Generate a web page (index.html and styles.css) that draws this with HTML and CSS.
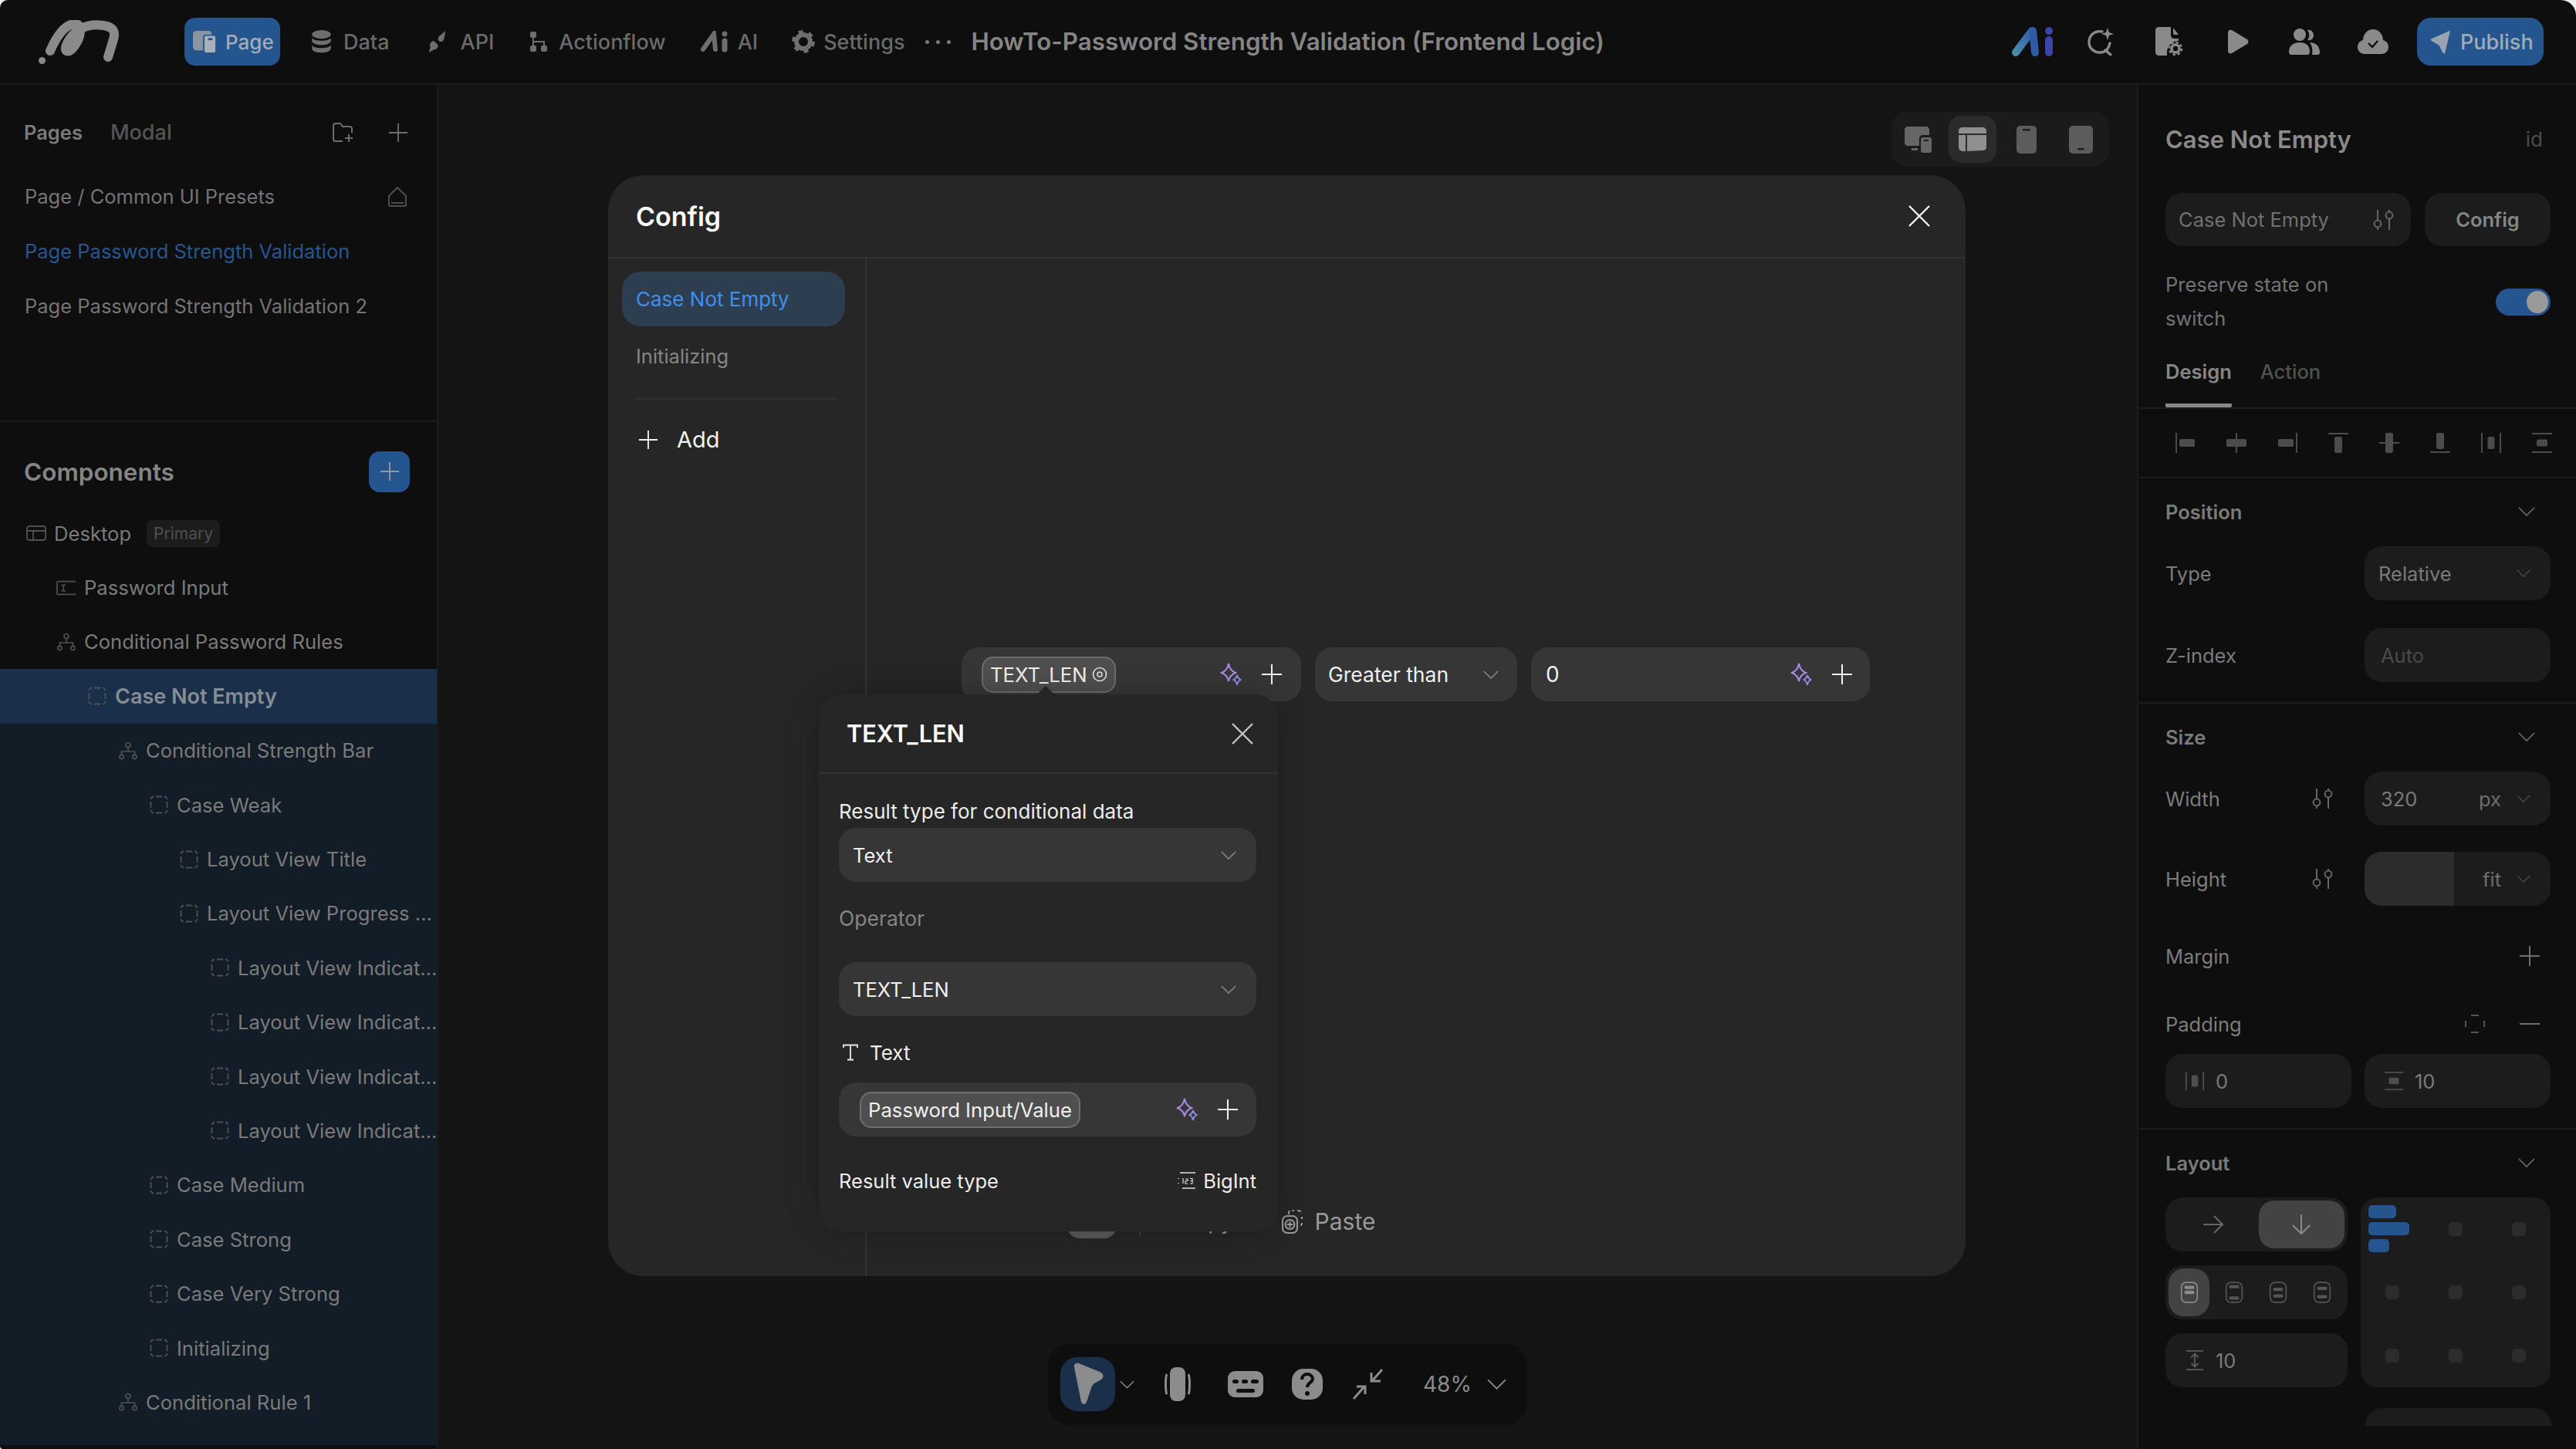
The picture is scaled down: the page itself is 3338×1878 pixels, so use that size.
FILE: index.html
```html
<!DOCTYPE html>
<html lang="en">

<head>
    <meta charset="UTF-8">
    <meta name="viewport" content="width=device-width, initial-scale=1.0">
    <title>HowTo-Password Strength Validation</title>
    <link rel="stylesheet" href="styles.css">
</head>

<body>
    <svg class="icon-defs" xmlns="http://www.w3.org/2000/svg">
        <symbol id="i-plus" viewBox="0 0 28 28"><path d="M14 1V27M1 14H27" fill="none" stroke="currentColor" stroke-width="2"/></symbol>
        <symbol id="i-minus" viewBox="0 0 28 28"><path d="M1 14H27" fill="none" stroke="currentColor" stroke-width="2"/></symbol>
        <symbol id="i-chev" viewBox="0 0 22 12"><path d="M1 1L11 11L21 1" fill="none" stroke="currentColor" stroke-width="1.6"/></symbol>
        <symbol id="i-x" viewBox="0 0 28 28"><path d="M1 1L27 27M27 1L1 27" fill="none" stroke="currentColor" stroke-width="2.4"/></symbol>
        <symbol id="i-dash" viewBox="0 0 24 24"><path d="M1.500 5A3.500 3.500 0 0 1 5 1.500M8 1.500H16M19 1.500A3.500 3.500 0 0 1 22.500 5M22.500 8V16M22.500 19A3.500 3.500 0 0 1 19 22.500M16 22.500H8M5 22.500A3.500 3.500 0 0 1 1.500 19M1.500 16V8" fill="none" stroke="currentColor" stroke-width="1.8"/></symbol>
        <symbol id="i-tree" viewBox="0 0 24 24"><g fill="none" stroke="currentColor" stroke-width="1.7"><circle cx="12" cy="4.5" r="3"/><circle cx="3.5" cy="20" r="2.6"/><circle cx="20.5" cy="20" r="2.6"/><path d="M12 7.5V13M3.5 17.4V13H20.5V17.4"/></g></symbol>
        <symbol id="i-sliders" viewBox="0 0 28 28"><g fill="none" stroke="currentColor" stroke-width="2"><circle cx="6" cy="19" r="4.4"/><path d="M6 1V14.6M6 23.4V27"/><circle cx="21" cy="8" r="4.4"/><path d="M21 1V3.6M21 12.4V27"/></g></symbol>
        <symbol id="i-spark" viewBox="0 0 28 32"><g fill="none" stroke-width="2"><path d="M11 2C12 8 15 12 20 14C15 16 12 19 11 25C10 19 7 16 2 14C7 12 10 8 11 2Z" stroke="#a98ce2"/><path d="M22 17C22.5 20 24 21.500 26.500 23C24 24.500 22.500 26 22 30C21.500 26 20 24.500 17.500 23C20 21.500 21.500 20 22 17Z" stroke="#8f8ae6"/></g></symbol>

        <symbol id="a-left" viewBox="0 0 28 28"><path d="M2 1V27" stroke="currentColor" stroke-width="2"/><rect x="6" y="9" width="20" height="10" rx="2" fill="currentColor"/></symbol>
        <symbol id="a-hcenter" viewBox="0 0 28 28"><path d="M14 1V27" stroke="currentColor" stroke-width="2"/><rect x="1" y="9" width="26" height="10" rx="2" fill="currentColor"/></symbol>
        <symbol id="a-right" viewBox="0 0 28 28"><path d="M26 1V27" stroke="currentColor" stroke-width="2"/><rect x="2" y="9" width="20" height="10" rx="2" fill="currentColor"/></symbol>
        <symbol id="a-top" viewBox="0 0 28 28"><path d="M1 2H27" stroke="currentColor" stroke-width="2"/><rect x="9" y="6" width="10" height="21" rx="2" fill="currentColor"/></symbol>
        <symbol id="a-vcenter" viewBox="0 0 28 28"><path d="M1 14H27" stroke="currentColor" stroke-width="2"/><rect x="9" y="1" width="10" height="26" rx="2" fill="currentColor"/></symbol>
        <symbol id="a-bottom" viewBox="0 0 28 28"><path d="M1 26H27" stroke="currentColor" stroke-width="2"/><rect x="9" y="1" width="10" height="21" rx="2" fill="currentColor"/></symbol>
        <symbol id="a-dishor" viewBox="0 0 28 28"><path d="M2 1V27M26 1V27" stroke="currentColor" stroke-width="2"/><rect x="9.500" y="6" width="9" height="16" rx="2" fill="currentColor"/></symbol>
        <symbol id="a-disver" viewBox="0 0 28 28"><path d="M1 2H27M1 26H27" stroke="currentColor" stroke-width="2"/><rect x="7" y="9.500" width="14" height="9" rx="2" fill="currentColor"/></symbol>

        <symbol id="d-top" viewBox="0 0 28 34"><rect x="2" y="2" width="24" height="30" rx="7" fill="none" stroke="currentColor" stroke-width="2"/><rect x="6.500" y="7" width="15" height="5" rx="2" fill="currentColor"/><rect x="6.500" y="14.500" width="15" height="5" rx="2" fill="currentColor"/></symbol>
        <symbol id="d-between" viewBox="0 0 28 34"><rect x="2" y="2" width="24" height="30" rx="7" fill="none" stroke="currentColor" stroke-width="2"/><rect x="6.500" y="6" width="15" height="5" rx="2" fill="currentColor"/><rect x="6.500" y="23" width="15" height="5" rx="2" fill="currentColor"/></symbol>
        <symbol id="d-around" viewBox="0 0 28 34"><rect x="2" y="2" width="24" height="30" rx="7" fill="none" stroke="currentColor" stroke-width="2"/><rect x="6.500" y="10" width="15" height="5" rx="2" fill="currentColor"/><rect x="6.500" y="20" width="15" height="5" rx="2" fill="currentColor"/></symbol>
        <symbol id="d-evenly" viewBox="0 0 28 34"><rect x="2" y="2" width="24" height="30" rx="7" fill="none" stroke="currentColor" stroke-width="2"/><rect x="6.500" y="8.500" width="15" height="5" rx="2" fill="currentColor"/><rect x="6.500" y="21" width="15" height="5" rx="2" fill="currentColor"/></symbol>
    </svg>

    <div class="app">
        <header class="topbar">
            <svg class="logo" viewBox="0 0 105 57"><g fill="none" stroke="#8a8a8a" stroke-linecap="round"><path d="M4.500 52.500L4.600 52.400" stroke-width="9"/><path d="M15 40C22 24 33 6 46 5C58 4 55 22 47 33C39 45 31 41 37 30C45 14 62 3 84 7C97 9 100 15 97 25L90 48" stroke-width="12"/></g></svg>
            <nav class="main-tabs">
                <a class="main-tab active">
                    <svg class="tab-icon" viewBox="0 0 32 32"><rect x="0" y="1" width="26" height="27" rx="5" fill="#8c96a3"/><rect x="15" y="7" width="17" height="25" rx="3" fill="#a8b0ba" stroke="#24558f" stroke-width="2"/><rect x="21" y="11" width="6" height="3" fill="#24558f"/></svg>
                    Page
                </a>
                <a class="main-tab data">
                    <svg class="tab-icon" viewBox="0 0 28 32"><g fill="#6e6e6e"><ellipse cx="14" cy="6" rx="13" ry="6"/><path d="M1 11C4 16 24 16 27 11V16C24 22 4 22 1 16Z"/><path d="M1 21C4 26 24 26 27 21V26C24 33 4 33 1 26Z"/></g></svg>
                    Data
                </a>
                <a class="main-tab api">
                    <svg class="tab-icon" viewBox="0 0 30 32"><g fill="#6e6e6e"><path d="M19 7L26 1L24 12C23 17 18 17 16 14C15 12 16 9 19 7Z"/><path d="M10 15L15 20C17 23 14 27 10 27L3 31L5 24C3 20 6 15 10 15Z"/></g></svg>
                    API
                </a>
                <a class="main-tab flow">
                    <svg class="tab-icon" viewBox="0 0 24 28"><g fill="#6e6e6e"><rect x="1" y="1" width="8" height="8" rx="2"/><rect x="1" y="19" width="8" height="8" rx="2"/><rect x="15" y="19" width="8" height="8" rx="2"/></g><path d="M5 9V14H19V19M5 14V19" fill="none" stroke="#6e6e6e" stroke-width="2"/></svg>
                    Actionflow
                </a>
                <a class="main-tab ai">
                    <svg class="tab-icon" viewBox="0 0 38 28"><g stroke="#6e6e6e" stroke-linecap="round" fill="none"><path d="M3 24L17 4L19 24" stroke-width="6"/><path d="M31 13V24" stroke-width="7"/><path d="M31 4V4.100" stroke-width="7"/></g></svg>
                    AI
                </a>
                <a class="main-tab settings">
                    <svg class="tab-icon" viewBox="0 0 30 30"><circle cx="15" cy="15" r="9" fill="none" stroke="#6e6e6e" stroke-width="6"/><circle cx="15" cy="15" r="13" fill="none" stroke="#6e6e6e" stroke-width="4" stroke-dasharray="6 7.600"/></svg>
                    Settings
                </a>
            </nav>
            <div class="more-dots"><i></i><i></i><i></i></div>
            <h1 class="project-title">HowTo-Password Strength Validation (Frontend Logic)</h1>
            <div class="top-actions">
                <svg class="ta ta-ai" viewBox="0 0 55 38"><defs><linearGradient id="ai-grad" x1="0" y1="1" x2="1" y2="0"><stop offset="0" stop-color="#4b8aa8"/><stop offset="1" stop-color="#2f5fb0"/></linearGradient></defs><g fill="none" stroke-linecap="round" stroke-width="10"><path d="M5 33L26 5" stroke="url(#ai-grad)"/><path d="M27 5L30 33" stroke="#2e5aa8"/><path d="M48 17V33" stroke="#3b45a8"/><path d="M48 5V5.100" stroke="#3b45a8"/></g></svg>
                <svg class="ta ta-search" viewBox="0 0 34 36"><g fill="none" stroke="#8a8a8a" stroke-width="3.400" stroke-linecap="round"><path d="M19 5C10 3 2 9 2 19C2 27 9 32 16 32C24 32 28 26 29 20"/><path d="M23 29L30 35"/></g><path d="M26 0L28 6L34 8L28 10L26 16L24 10L18 8L24 6Z" fill="#8a8a8a"/></svg>
                <svg class="ta ta-file" viewBox="0 0 36 38"><path d="M4 0H20V11C20 13 22 15 24 15H30V18C22 18 15 24 15 33V37H4C2 37 0 35 0 33V4C0 2 2 0 4 0Z" fill="#8a8a8a"/><path d="M23 1L30 10H25C24 10 23 9 23 8Z" fill="#8a8a8a"/><circle cx="26" cy="28" r="5" fill="none" stroke="#8a8a8a" stroke-width="3.500"/><circle cx="26" cy="28" r="8" fill="none" stroke="#8a8a8a" stroke-width="2.500" stroke-dasharray="3.500 2.800"/></svg>
                <svg class="ta ta-play" viewBox="0 0 28 32"><path d="M1 4C1 1 4 0 6 1L26 13C28 15 28 17 26 19L6 31C4 32 1 31 1 28Z" fill="#8a8a8a"/></svg>
                <svg class="ta ta-users" viewBox="0 0 40 34"><g fill="#8a8a8a"><circle cx="14" cy="8" r="8"/><path d="M0 30C0 22 6 18 14 18C22 18 27 22 27 30C27 32 26 34 24 34H3C1 34 0 32 0 30Z"/><path d="M24 2C29 1 32 5 32 9C32 13 28 16 24 15C27 11 27 6 24 2Z"/><path d="M27 18C35 18 40 23 40 31C40 33 39 34 37 34H30C31 28 30 22 27 18Z"/></g></svg>
                <svg class="ta ta-cloud" viewBox="0 0 40 32"><path d="M9 32C4 32 0 28 0 23C0 18 3 15 7 14C7 6 13 0 20 0C27 0 33 6 33 14C37 15 40 18 40 23C40 28 36 32 31 32Z" fill="#8a8a8a"/><path d="M14 18L19 23L26 15" fill="none" stroke="#0e0e0e" stroke-width="2.400"/></svg>
                <button class="publish">
                    <svg class="publish-icon" viewBox="0 0 28 32"><path d="M27 1L20 31C20 32 18 32 17 31L12 21L2 15C0 14 1 12 2 12Z" fill="#9aa4b0"/></svg>
                    Publish
                </button>
            </div>
        </header>

        <div class="workspace">
            <aside class="left-panel">
                <section class="pages">
                    <div class="pages-head">
                        <span class="pages-tab">Pages</span>
                        <span class="pages-tab muted">Modal</span>
                        <svg class="new-folder" viewBox="0 0 28 26"><path d="M14 24H5C3 24 2 23 2 21V4C2 2 3 1 5 1H11L14 5H23C25 5 26 6 26 8V13" fill="none" stroke="#6e6e6e" stroke-width="2"/><path d="M22 15V25M17 20H27" fill="none" stroke="#6e6e6e" stroke-width="2"/></svg>
                        <svg class="icon-26 dim pages-plus"><use href="#i-plus"/></svg>
                    </div>
                    <div class="page-row">
                        Page / Common UI Presets
                        <svg class="home" viewBox="0 0 28 26"><path d="M14 1L25 12V24C25 24.500 24.500 25 24 25H4C3.500 25 3 24.500 3 24V12Z M6 21H22" fill="none" stroke="#4e4e4e" stroke-width="2"/></svg>
                    </div>
                    <div class="page-row current">Page Password Strength Validation</div>
                    <div class="page-row">Page Password Strength Validation 2</div>
                </section>

                <section class="components">
                    <div class="comp-head">
                        <h2>Components</h2>
                        <button class="comp-add"><svg class="icon-26"><use href="#i-plus"/></svg></button>
                    </div>
                    <ul class="tree">
                        <li class="tree-row lvl0">
                            <svg class="tree-icon" viewBox="0 0 26 20"><g fill="none" stroke="currentColor" stroke-width="1.800"><rect x="1" y="1" width="24" height="18" rx="3"/><path d="M1 7H25M9 7V19"/></g></svg>
                            <span class="desktop-name">Desktop</span><span class="badge">Primary</span>
                        </li>
                        <li class="tree-row lvl1">
                            <svg class="tree-icon" viewBox="0 0 28 20"><g fill="none" stroke="currentColor" stroke-width="1.800"><path d="M27 1H2C1.500 1 1 1.500 1 2V18C1 18.500 1.500 19 2 19H27"/><path d="M7 6H13M7 14H13M10 6V14"/></g></svg>
                            Password Input
                        </li>
                        <li class="tree-row lvl1"><svg class="tree-icon"><use href="#i-tree"/></svg>Conditional Password Rules</li>
                        <li class="tree-row lvl2 selected"><svg class="tree-icon"><use href="#i-dash"/></svg>Case Not Empty</li>
                    </ul>
                    <ul class="tree children">
                        <li class="tree-row lvl3"><svg class="tree-icon"><use href="#i-tree"/></svg>Conditional Strength Bar</li>
                        <li class="tree-row lvl4"><svg class="tree-icon"><use href="#i-dash"/></svg>Case Weak</li>
                        <li class="tree-row lvl5"><svg class="tree-icon"><use href="#i-dash"/></svg>Layout View Title</li>
                        <li class="tree-row lvl5"><svg class="tree-icon"><use href="#i-dash"/></svg>Layout View Progress …</li>
                        <li class="tree-row lvl6"><svg class="tree-icon"><use href="#i-dash"/></svg>Layout View Indicat…</li>
                        <li class="tree-row lvl6"><svg class="tree-icon"><use href="#i-dash"/></svg>Layout View Indicat…</li>
                        <li class="tree-row lvl6"><svg class="tree-icon"><use href="#i-dash"/></svg>Layout View Indicat…</li>
                        <li class="tree-row lvl6"><svg class="tree-icon"><use href="#i-dash"/></svg>Layout View Indicat…</li>
                        <li class="tree-row lvl4"><svg class="tree-icon"><use href="#i-dash"/></svg>Case Medium</li>
                        <li class="tree-row lvl4"><svg class="tree-icon"><use href="#i-dash"/></svg>Case Strong</li>
                        <li class="tree-row lvl4"><svg class="tree-icon"><use href="#i-dash"/></svg>Case Very Strong</li>
                        <li class="tree-row lvl4"><svg class="tree-icon"><use href="#i-dash"/></svg>Initializing</li>
                        <li class="tree-row lvl3"><svg class="tree-icon"><use href="#i-tree"/></svg>Conditional Rule 1</li>
                    </ul>
                </section>
            </aside>

            <main class="canvas">
                <div class="device-switch">
                    <span class="device">
                        <svg viewBox="0 0 36 36"><path d="M4 1H28C30 1 32 3 32 5V12H24C21 12 19 14 19 17V26H4C2 26 0 24 0 22V5C0 3 2 1 4 1Z" fill="#666"/><rect x="9" y="29" width="8" height="3" fill="#666"/><rect x="21" y="15" width="14" height="20" rx="3" fill="#666"/><rect x="25" y="18" width="6" height="2" fill="#1c1c1c"/></svg>
                    </span>
                    <span class="device active">
                        <svg viewBox="0 0 36 32"><path d="M5 0H31C34 0 36 2 36 5V8H0V5C0 2 2 0 5 0Z" fill="#8f8f8f"/><path d="M0 10H9V31H6C2 31 0 29 0 25Z" fill="#8f8f8f"/><path d="M11 10H36V25C36 29 34 30 30 30L11 31Z" fill="#8f8f8f"/></svg>
                    </span>
                    <span class="device">
                        <svg class="phone" viewBox="0 0 26 36"><rect width="26" height="36" rx="5" fill="#5c5c5c"/><rect x="8" y="4" width="10" height="2.400" fill="#1c1c1c"/></svg>
                    </span>
                    <span class="device">
                        <svg class="tablet" viewBox="0 0 31 36"><rect width="31" height="36" rx="5" fill="#5c5c5c"/><rect x="11.500" y="29" width="8" height="2.400" fill="#1c1c1c"/></svg>
                    </span>
                </div>

                <div class="config-modal">
                    <div class="modal-head">
                        <h2>Config</h2>
                        <svg class="icon-28 white"><use href="#i-x"/></svg>
                    </div>
                    <div class="modal-body">
                        <div class="case-list">
                            <div class="case-item current">Case Not Empty</div>
                            <div class="case-item">Initializing</div>
                            <div class="case-sep"></div>
                            <div class="case-add"><svg class="icon-26 white"><use href="#i-plus"/></svg>Add</div>
                        </div>
                        <div class="case-main">
                            <div class="condition-row">
                                <div class="field cond-a">
                                    <span class="chip">TEXT_LEN
                                        <svg class="chip-dot" viewBox="0 0 20 20"><g fill="none" stroke="#e0e0e0" stroke-width="1.600"><circle cx="10" cy="10" r="8.500"/><circle cx="10" cy="10" r="3"/></g></svg>
                                    </span>
                                    <svg class="spark"><use href="#i-spark"/></svg>
                                    <svg class="icon-28 white"><use href="#i-plus"/></svg>
                                </div>
                                <div class="field cond-b">Greater than<svg class="chev-sm"><use href="#i-chev"/></svg></div>
                                <div class="field cond-c">
                                    <span class="cond-val">0</span>
                                    <svg class="spark"><use href="#i-spark"/></svg>
                                    <svg class="icon-28 white"><use href="#i-plus"/></svg>
                                </div>
                            </div>
                            <div class="case-actions">
                                <span class="mini-toggle"></span>
                                <span class="act-sep"></span>
                                <span class="act-copy">Copy</span>
                                <svg class="act-icon" viewBox="0 0 28 32"><g fill="none" stroke="#9a9a9a" stroke-width="2"><path d="M9 7V5C9 3 10 2 12 2H16M20 2C22 2 26 3 26 5M26 10V13M26 18C26 20 25 21 24 21" stroke-dasharray="5 3"/><rect x="1" y="9" width="19" height="22" rx="6"/><circle cx="10.500" cy="20" r="6"/><path d="M10.500 16V24M6.500 20H14.500"/></g></svg>
                                <span class="act-paste">Paste</span>
                            </div>
                        </div>
                    </div>

                    <div class="func-popover">
                        <div class="pop-head">
                            <h3>TEXT_LEN</h3>
                            <svg class="icon-28 soft"><use href="#i-x"/></svg>
                        </div>
                        <div class="pop-body">
                            <div class="pop-label first">Result type for conditional data</div>
                            <div class="field pop-select sel-a">Text<svg class="chev-sm"><use href="#i-chev"/></svg></div>
                            <div class="pop-label muted op-label">Operator</div>
                            <div class="field pop-select sel-b">TEXT_LEN<svg class="chev-sm"><use href="#i-chev"/></svg></div>
                            <div class="pop-label text-label">
                                <svg class="t-icon" viewBox="0 0 20 22"><path d="M1 5V1.500H19V5M10 1.500V20.500M6 20.500H14" fill="none" stroke="#e8e8e8" stroke-width="1.800"/></svg>
                                Text
                            </div>
                            <div class="field pop-input">
                                <span class="chip wide">Password Input/Value</span>
                                <svg class="spark"><use href="#i-spark"/></svg>
                                <svg class="icon-28 white"><use href="#i-plus"/></svg>
                            </div>
                            <div class="pop-result">
                                <span>Result value type</span>
                                <span class="result-type">
                                    <svg class="num-icon" viewBox="0 0 24 24"><g fill="none" stroke="#e0e0e0" stroke-width="1.500"><path d="M3 2H23M6 22H23M1 9V10M1 15V16"/></g><path d="M7 9V16M10 10H13V12.500H10V16H13M16 9.500H19V12.500H16.500M19 12.500V16H16" fill="none" stroke="#e0e0e0" stroke-width="1.200"/></svg>
                                    BigInt
                                </span>
                            </div>
                        </div>
                    </div>
                </div>

                <div class="tool-dock">
                    <span class="tool-pointer">
                        <svg viewBox="0 0 40 56"><path d="M2 6C1 2 4 0 8 1L35 12C40 14 41 19 37 22L30 26C27 27 25 30 24 33L18 51C16 55 13 55 11 51Z" fill="#8c8c8c"/></svg>
                    </span>
                    <svg class="tool-chev"><use href="#i-chev"/></svg>
                    <svg class="tool scroll" viewBox="0 0 34 46"><rect x="7" y="1" width="20" height="44" rx="8" fill="#8c8c8c"/><path d="M3 10C1 14 1 32 3 36M31 10C33 14 33 32 31 36" fill="none" stroke="#8c8c8c" stroke-width="3"/></svg>
                    <svg class="tool keyboard" viewBox="0 0 46 34"><rect width="46" height="34" rx="9" fill="#8c8c8c"/><g fill="#0e0e0e"><rect x="6" y="11" width="8" height="5" rx="2.500"/><rect x="18" y="11" width="8" height="5" rx="2.500"/><rect x="30" y="11" width="10" height="5" rx="2.500"/><rect x="11" y="23" width="24" height="5" rx="2.500"/></g></svg>
                    <svg class="tool help" viewBox="0 0 40 40"><rect width="40" height="40" rx="15" fill="#8c8c8c"/><path d="M13 14C13 9 17 7 20 7C24 7 27 10 27 13C27 18 20 18 20 24" fill="none" stroke="#0e0e0e" stroke-width="4"/><circle cx="20" cy="32" r="3" fill="#0e0e0e"/></svg>
                    <svg class="tool collapse" viewBox="0 0 42 40"><g fill="none" stroke="#8c8c8c" stroke-width="3"><path d="M39 1L25 17M25 5V16H37"/><path d="M2 39L16 23M6 23H17V33"/></g></svg>
                    <span class="zoom-value">48%</span>
                    <svg class="zoom-chev"><use href="#i-chev"/></svg>
                </div>
            </main>

            <aside class="right-panel">
                <div class="rp-top">
                    <div class="rp-head"><h2>Case Not Empty</h2><span class="rp-id">id</span></div>
                    <div class="rp-name">
                        <div class="name-box">Case Not Empty<svg class="icon-sliders"><use href="#i-sliders"/></svg></div>
                        <button class="config-btn">Config</button>
                    </div>
                    <div class="rp-preserve">
                        <span>Preserve state on<br>switch</span>
                        <span class="toggle"><i></i></span>
                    </div>
                    <div class="rp-tabs">
                        <span class="rp-tab active">Design</span>
                        <span class="rp-tab">Action</span>
                    </div>
                </div>

                <div class="align-bar">
                    <svg><use href="#a-left"/></svg>
                    <svg><use href="#a-hcenter"/></svg>
                    <svg><use href="#a-right"/></svg>
                    <svg><use href="#a-top"/></svg>
                    <svg><use href="#a-vcenter"/></svg>
                    <svg><use href="#a-bottom"/></svg>
                    <svg><use href="#a-dishor"/></svg>
                    <svg><use href="#a-disver"/></svg>
                </div>

                <section class="prop-section">
                    <div class="prop-title"><h3>Position</h3><svg class="chev-lg"><use href="#i-chev"/></svg></div>
                    <div class="prop-row">
                        <label>Type</label>
                        <div class="prop-box">Relative<svg class="chev-box"><use href="#i-chev"/></svg></div>
                    </div>
                    <div class="prop-row">
                        <label>Z-index</label>
                        <div class="prop-box placeholder">Auto</div>
                    </div>
                </section>

                <section class="prop-section size-section">
                    <div class="prop-title"><h3>Size</h3><svg class="chev-lg"><use href="#i-chev"/></svg></div>
                    <div class="prop-row">
                        <label>Width</label>
                        <svg class="icon-sliders"><use href="#i-sliders"/></svg>
                        <div class="prop-box num">320<span class="unit">px</span><svg class="chev-unit"><use href="#i-chev"/></svg></div>
                    </div>
                    <div class="prop-row">
                        <label>Height</label>
                        <svg class="icon-sliders"><use href="#i-sliders"/></svg>
                        <div class="prop-box split"><span class="split-empty"></span><span class="unit">fit</span><svg class="chev-unit"><use href="#i-chev"/></svg></div>
                    </div>
                    <div class="prop-line margin-line"><label>Margin</label><svg class="icon-28 dim"><use href="#i-plus"/></svg></div>
                    <div class="prop-line padding-line">
                        <label>Padding</label>
                        <svg class="icon-28 dimmer" viewBox="0 0 28 28"><path d="M9 3H19M9 25H19M2 10V18M26 10V18" stroke="currentColor" stroke-width="2"/></svg>
                        <svg class="icon-28 dim"><use href="#i-minus"/></svg>
                    </div>
                    <div class="prop-pair">
                        <div class="prop-box num">
                            <svg class="pad-icon"><use href="#a-dishor"/></svg>0
                        </div>
                        <div class="prop-box num">
                            <svg class="pad-icon"><use href="#a-disver"/></svg>10
                        </div>
                    </div>
                </section>

                <section class="prop-section last">
                    <div class="prop-title"><h3>Layout</h3><svg class="chev-lg"><use href="#i-chev"/></svg></div>
                    <div class="layout-grid">
                        <div class="layout-left">
                            <div class="seg seg-dir">
                                <span class="seg-item">
                                    <svg viewBox="0 0 26 26"><path d="M0 13H24M14 2L25 13L14 24" fill="none" stroke="#666" stroke-width="2"/></svg>
                                </span>
                                <span class="seg-item active">
                                    <svg viewBox="0 0 26 26"><path d="M13 0V24M2 14L13 25L24 14" fill="none" stroke="#8a8a8a" stroke-width="2"/></svg>
                                </span>
                            </div>
                            <div class="seg seg-dist">
                                <span class="seg-item active light"><svg><use href="#d-top"/></svg></span>
                                <span class="seg-item"><svg><use href="#d-between"/></svg></span>
                                <span class="seg-item"><svg><use href="#d-around"/></svg></span>
                                <span class="seg-item"><svg><use href="#d-evenly"/></svg></span>
                            </div>
                            <div class="prop-box num gap-box">
                                <svg class="pad-icon" viewBox="0 0 28 28"><path d="M2 1H26M2 27H26M14 6V22M9 10L14 5L19 10M9 18L14 23L19 18" fill="none" stroke="#5a5a5a" stroke-width="2"/></svg>10
                            </div>
                        </div>
                        <div class="align-grid">
                            <span class="bars"><i class="b1"></i><i class="b2"></i><i class="b3"></i></span>
                            <i class="cell"></i><i class="cell"></i>
                            <i class="cell"></i><i class="cell"></i><i class="cell"></i>
                            <i class="cell"></i><i class="cell"></i><i class="cell"></i>
                        </div>
                    </div>
                    <div class="cut-box"></div>
                </section>
            </aside>
        </div>
    </div>
</body>

</html>
```

FILE: styles.css
```css
* {
    box-sizing: border-box;
}

html,
body {
    margin: 0;
    background-color: #f0f0f0;
}

h1,
h2,
h3,
ul {
    margin: 0;
    padding: 0;
    list-style: none;
}

svg {
    display: block;
    flex: none;
}

button {
    border: 0;
    font-family: inherit;
}

.icon-defs {
    position: absolute;
    width: 0;
    height: 0;
}

.app {
    width: 3338px;
    height: 1878px;
    display: flex;
    flex-direction: column;
    overflow: hidden;
    border-radius: 10px 20px 0 4px;
    background-color: #0e0e0e;
    color: #7c7c7c;
    font-family: Inter, "Liberation Sans", sans-serif;
    font-size: 25.5px;
}

.icon-26 {
    width: 26px;
    height: 26px;
}

.icon-28 {
    width: 28px;
    height: 28px;
}

.white {
    color: #f2f2f2;
}

.soft {
    color: #c4c4c4;
}

.dim {
    color: #6e6e6e;
}

.dimmer {
    color: #555;
}

/* top bar */
.topbar {
    height: 110px;
    flex: none;
    display: flex;
    align-items: center;
    padding-left: 50px;
    border-bottom: 2px solid #1c1c1c;
}

.logo {
    width: 105px;
    height: 57px;
    margin-right: 84px;
}

.main-tabs {
    display: flex;
    align-items: center;
}

.main-tab {
    height: 62px;
    display: flex;
    align-items: center;
    color: #6a6a6a;
    font-weight: 500;
    font-size: 27px;
    white-space: nowrap;
}

.main-tab .tab-icon {
    height: 30px;
    margin-right: 12px;
}

.main-tab.active {
    width: 124px;
    padding-left: 11px;
    border-radius: 14px;
    background-color: #24558f;
    color: #a3abb5;
    font-size: 26px;
}

.main-tab.data {
    margin-left: 40px;
}

.main-tab.data .tab-icon {
    width: 27px;
    margin-right: 15px;
}

.main-tab.api {
    margin-left: 48px;
}

.main-tab.api .tab-icon {
    width: 30px;
    margin-right: 14px;
}

.main-tab.flow {
    margin-left: 46px;
}

.main-tab.flow .tab-icon {
    width: 24px;
    height: 28px;
    margin-right: 14px;
}

.main-tab.ai {
    margin-left: 45px;
}

.main-tab.ai .tab-icon {
    width: 38px;
    height: 28px;
    margin-right: 10px;
}

.main-tab.settings {
    margin-left: 44px;
}

.main-tab.settings .tab-icon {
    width: 30px;
    margin-right: 11px;
}

.more-dots {
    display: flex;
    gap: 9px;
    margin-left: 27px;
}

.more-dots i {
    width: 5px;
    height: 5px;
    border-radius: 50%;
    background-color: #7a7a7a;
}

.project-title {
    margin-left: 26px;
    color: #858585;
    font-size: 31.3px;
    font-weight: 600;
    white-space: nowrap;
}

.top-actions {
    margin-left: auto;
    display: flex;
    align-items: center;
    padding-right: 42px;
}

.ta-ai {
    width: 55px;
    height: 38px;
}

.ta-search {
    width: 34px;
    height: 36px;
    margin-left: 43px;
}

.ta-file {
    width: 36px;
    height: 38px;
    margin-left: 54px;
}

.ta-play {
    width: 28px;
    height: 32px;
    margin-left: 57px;
}

.ta-users {
    width: 40px;
    height: 34px;
    margin-left: 52px;
}

.ta-cloud {
    width: 40px;
    height: 32px;
    margin-left: 49px;
}

.publish {
    width: 164px;
    height: 62px;
    margin-left: 37px;
    display: flex;
    align-items: center;
    padding-left: 17px;
    border-radius: 18px;
    background-color: #24558f;
    color: #a3abb5;
    font-size: 27px;
    font-weight: 500;
}

.publish-icon {
    width: 27px;
    height: 32px;
    margin-right: 12px;
}

/* panels */
.workspace {
    flex: 1;
    display: flex;
    min-height: 0;
}

.left-panel {
    width: 568px;
    flex: none;
    border-right: 2px solid #1c1c1c;
}

.pages {
    height: 437px;
    border-bottom: 2px solid #1c1c1c;
}

.pages-head {
    height: 109px;
    display: flex;
    align-items: flex-start;
    padding: 44px 37px 0 31px;
}

.pages-tab {
    margin-right: 36px;
    line-height: 36px;
    font-weight: 600;
    font-size: 25.5px;
    color: #7a7a7a;
}

.pages-tab.muted {
    font-weight: 500;
    font-size: 27px;
    color: #555;
}

.new-folder {
    width: 28px;
    height: 26px;
    margin: 5px 45px 0 auto;
}

.pages-plus {
    margin-top: 5px;
}

.page-row {
    height: 71px;
    display: flex;
    align-items: center;
    justify-content: space-between;
    padding: 0 37px 0 32px;
    font-size: 25.5px;
    color: #747474;
}

.page-row.current {
    color: #25568f;
}

.home {
    width: 28px;
    height: 26px;
}

.comp-head {
    height: 108px;
    display: flex;
    align-items: center;
    justify-content: space-between;
    padding: 20px 35px 0 31px;
}

.comp-head h2 {
    font-size: 31.5px;
    font-weight: 600;
    color: #858585;
}

.comp-add {
    width: 53px;
    height: 53px;
    display: flex;
    align-items: center;
    justify-content: center;
    border-radius: 14px;
    background-color: #24558f;
    color: #8d9aa8;
}

.tree {
    padding-top: 1px;
}

.tree-row {
    height: 70.4px;
    display: flex;
    align-items: center;
    color: #7a7a7a;
    white-space: nowrap;
    font-size: 25.6px;
}

.tree-icon {
    width: 26px;
    height: 24px;
    margin-right: 10px;
    color: #505050;
}

.lvl0 { padding-left: 34px; }
.lvl1 { padding-left: 73px; }
.lvl2 { padding-left: 113px; }
.lvl3 { padding-left: 153px; }
.lvl4 { padding-left: 193px; }
.lvl5 { padding-left: 232px; }
.lvl6 { padding-left: 272px; }

.badge {
    margin-left: 20px;
    padding: 0 9px;
    height: 35px;
    line-height: 35px;
    border-radius: 8px;
    background-color: #1c1c1c;
    color: #4f4f4f;
    font-size: 21px;
}

.tree-row.selected {
    background-color: #1a2f4a;
    color: #868c94;
    font-weight: 600;
    font-size: 27px;
}

.children {
    padding-top: 0;
    padding-bottom: 20px;
    background-color: #131d28;
}

/* canvas */
.canvas {
    flex: 1;
    min-width: 0;
    position: relative;
    background-color: #141414;
}

.device-switch {
    position: absolute;
    left: 1883px;
    top: 35px;
    width: 282px;
    height: 71px;
    display: flex;
    align-items: center;
    gap: 8px;
    padding: 0 4px;
    border-radius: 20px;
    background-color: #1b1b1b;
}

.device {
    width: 62px;
    height: 61px;
    display: flex;
    align-items: center;
    justify-content: center;
    border-radius: 16px;
}

.device svg {
    width: 36px;
    height: 36px;
}

.device.active {
    background-color: #2b2b2b;
}

.device svg.phone {
    width: 26px;
}

.device svg.tablet {
    width: 31px;
}

/* config modal */
.config-modal {
    position: absolute;
    left: 220px;
    top: 117px;
    width: 1759px;
    height: 1427px;
    display: flex;
    flex-direction: column;
    border-radius: 46px;
    background-color: #262626;
    color: #e8e8e8;
}

.modal-head {
    height: 108px;
    flex: none;
    display: flex;
    align-items: center;
    justify-content: space-between;
    padding: 0 46px 0 36px;
    border-bottom: 2px solid #333;
}

.modal-head h2 {
    color: #fff;
    font-size: 34px;
    font-weight: 600;
}

.modal-body {
    flex: 1;
    display: flex;
}

.case-list {
    width: 335px;
    flex: none;
    padding: 17px 26px 0 18px;
    border-right: 2px solid #333;
}

.case-item {
    height: 71px;
    display: flex;
    align-items: center;
    margin-bottom: 3px;
    padding-left: 18px;
    border-radius: 24px;
    color: #868686;
    font-size: 25.5px;
}

.case-item.current {
    background-color: #2d3e50;
    color: #3f8fee;
    font-size: 26px;
}

.case-sep {
    height: 2px;
    margin: 19px 10px 0 17px;
    background-color: #333;
}

.case-add {
    display: flex;
    align-items: center;
    margin-top: 34px;
    padding-left: 21px;
    color: #f2f2f2;
    font-size: 29px;
}

.case-add svg {
    margin-right: 24px;
}

.case-main {
    flex: 1;
    padding: 504px 0 0 123px;
}

.condition-row {
    display: flex;
    gap: 18px;
}

.field {
    height: 70px;
    display: flex;
    align-items: center;
    border-radius: 22px;
    background-color: #363636;
    color: #f0f0f0;
    font-size: 25.5px;
}

.cond-a {
    width: 440px;
    padding: 0 24px 0 26px;
}

.cond-b {
    width: 262px;
    padding: 0 24px 0 17px;
    justify-content: space-between;
    font-size: 26.5px;
}

.cond-c {
    width: 439px;
    padding: 0 22px 0 19px;
}

.cond-val {
    font-size: 28px;
}

.chip {
    height: 47px;
    display: flex;
    align-items: center;
    padding: 0 9px;
    border: 2px solid #6e6e6e;
    border-radius: 15px;
    background-color: #4f4f4f;
    color: #f0f0f0;
    font-size: 25.7px;
    white-space: nowrap;
}

.chip-dot {
    width: 20px;
    height: 20px;
    margin-left: 6px;
}

.spark {
    width: 28px;
    height: 32px;
    margin-left: auto;
    margin-right: 25px;
}

.chev-sm {
    width: 20px;
    height: 11px;
    color: #8a8a8a;
}

.case-actions {
    display: flex;
    align-items: center;
    height: 50px;
    margin: 649px 0 0 137px;
    color: #9a9a9a;
    font-size: 28px;
}

.mini-toggle {
    width: 64px;
    height: 44px;
    border-radius: 16px;
    background-color: #5a5a5a;
    margin-top: 0;
}

.act-sep {
    width: 2px;
    height: 40px;
    margin-left: 29px;
    background-color: #3c3c3c;
}

.act-copy {
    margin-left: 50px;
    color: #9a9a9a;
}

.act-icon {
    width: 28px;
    height: 32px;
    margin-left: 63px;
}

.act-paste {
    margin-left: 15px;
    font-size: 30px;
}

/* popover over the condition row */
.func-popover {
    position: absolute;
    left: 273px;
    top: 673px;
    width: 595px;
    height: 696px;
    border-radius: 30px;
    background-color: #262626;
    box-shadow: 0 0 40px rgba(0, 0, 0, 0.25);
}

.func-popover::before {
    content: "";
    position: absolute;
    left: 286px;
    top: -8px;
    width: 16px;
    height: 16px;
    transform: rotate(45deg);
    background-color: #262626;
}

.pop-head {
    height: 103px;
    display: flex;
    align-items: center;
    justify-content: space-between;
    padding: 0 32px 0 36px;
    border-bottom: 2px solid #333;
}

.pop-head h3 {
    color: #fff;
    font-size: 30.7px;
    font-weight: 600;
}

.pop-body {
    padding: 0 28px 0 26px;
}

.pop-label {
    height: 40px;
    display: flex;
    align-items: center;
    font-size: 26px;
    color: #ececec;
}

.pop-label.first {
    margin-top: 28px;
}

.pop-select {
    justify-content: space-between;
    margin-top: 2px;
    padding: 0 26px 0 18px;
}

.op-label {
    margin-top: 27px;
}

.pop-label.muted {
    color: #858585;
    font-size: 26.5px;
}

.sel-b {
    margin-top: 37px;
}

.text-label {
    margin-top: 27px;
    padding-left: 5px;
}

.t-icon {
    width: 20px;
    height: 22px;
    margin-right: 15px;
}

.pop-input {
    margin-top: 19px;
    padding: 0 23px 0 27px;
}

.pop-result {
    height: 40px;
    display: flex;
    align-items: center;
    justify-content: space-between;
    margin-top: 37px;
    font-size: 25.5px;
    color: #ececec;
}

.result-type {
    display: flex;
    align-items: center;
}

.num-icon {
    width: 24px;
    height: 24px;
    margin-right: 9px;
}

/* bottom dock */
.tool-dock {
    position: absolute;
    left: 789px;
    top: 1631px;
    width: 622px;
    height: 106px;
    display: flex;
    align-items: center;
    padding-left: 17px;
    border-radius: 30px;
    background-color: #0e0e0e;
    color: #8a8a8a;
}

.tool-pointer {
    width: 71px;
    height: 70px;
    display: flex;
    align-items: center;
    justify-content: center;
    border-radius: 22px;
    background-color: #1a2f4a;
}

.tool-pointer svg {
    width: 40px;
    height: 56px;
}

.tool-chev {
    width: 19px;
    height: 11px;
    margin-left: 6px;
}

.tool.scroll {
    width: 34px;
    height: 46px;
    margin-left: 39px;
}

.tool.keyboard {
    width: 46px;
    height: 34px;
    margin-left: 48px;
}

.tool.help {
    width: 40px;
    height: 40px;
    margin-left: 37px;
}

.tool.collapse {
    width: 42px;
    height: 40px;
    margin-left: 38px;
}

.zoom-value {
    margin-left: 50px;
    font-size: 28px;
}

.zoom-chev {
    width: 25px;
    height: 14px;
    margin-left: 20px;
}

/* right panel */
.right-panel {
    width: 569px;
    flex: none;
    border-left: 2px solid #1c1c1c;
}

.rp-top {
    height: 420px;
    padding: 0 33px 0 35px;
    border-bottom: 2px solid #1c1c1c;
}

.rp-head {
    height: 140px;
    display: flex;
    align-items: center;
    justify-content: space-between;
}

.rp-head h2 {
    color: #8a8a8a;
    font-size: 31px;
    font-weight: 600;
}

.rp-id {
    margin-right: 10px;
    color: #4d4d4d;
    font-size: 26px;
}

.rp-name {
    display: flex;
    gap: 18px;
    height: 69px;
}

.name-box {
    width: 318px;
    display: flex;
    align-items: center;
    justify-content: space-between;
    padding: 0 21px 0 17px;
    border-radius: 22px;
    background-color: #1c1c1c;
    color: #707070;
}

.icon-sliders {
    width: 28px;
    height: 28px;
    color: #666;
}

.config-btn {
    width: 163px;
    border-radius: 22px;
    background-color: #1c1c1c;
    color: #858585;
    font-size: 25.5px;
    font-weight: 600;
}

.rp-preserve {
    display: flex;
    align-items: center;
    justify-content: space-between;
    margin-top: 28px;
    line-height: 44px;
    color: #747474;
}

.toggle {
    width: 71px;
    height: 35px;
    display: flex;
    justify-content: flex-end;
    padding: 3px;
    border-radius: 18px;
    background-color: #24558f;
}

.toggle i {
    width: 28px;
    height: 29px;
    border-radius: 50%;
    background-color: #9a9a9a;
}

.rp-tabs {
    display: flex;
    gap: 37px;
    margin-top: 20px;
}

.rp-tab {
    height: 73px;
    padding-top: 11px;
    color: #505050;
    font-size: 25.5px;
    font-weight: 500;
}

.rp-tab.active {
    border-bottom: 5px solid #888;
    border-radius: 0 0 2px 2px;
    color: #868686;
    font-weight: 600;
}

.align-bar {
    height: 90px;
    display: flex;
    align-items: center;
    gap: 38px;
    padding-left: 47px;
    border-bottom: 2px solid #1c1c1c;
    color: #4c4c4c;
}

.align-bar svg {
    width: 28px;
    height: 28px;
}

.prop-section {
    padding: 0 33px 26px 35px;
    border-bottom: 2px solid #1c1c1c;
}

.prop-section.last {
    padding-bottom: 0;
    border-bottom: 0;
}

.prop-title {
    height: 88px;
    display: flex;
    align-items: center;
    justify-content: space-between;
    padding: 0 20px 2px 0;
}

.prop-title h3 {
    font-size: 25.5px;
    font-weight: 600;
    color: #7a7a7a;
}

.chev-lg {
    width: 22px;
    height: 12px;
    color: #6e6e6e;
}

.prop-row {
    display: flex;
    align-items: center;
    margin-bottom: 36px;
}

.size-section .prop-row {
    margin-bottom: 34px;
}

.prop-section > .prop-row:last-of-type {
    margin-bottom: 0;
}

.prop-row label {
    flex: 1;
}

.prop-line label {
    margin-right: auto;
}

.prop-row .icon-sliders {
    margin-right: 40px;
}

.prop-box {
    width: 241px;
    height: 70px;
    flex: none;
    display: flex;
    align-items: center;
    padding: 0 26px 0 18px;
    border-radius: 22px;
    background-color: #1c1c1c;
    color: #7a7a7a;
    overflow: hidden;
}

.prop-box.placeholder {
    padding-left: 21px;
    color: #4a4a4a;
}

.prop-box.num {
    padding-left: 21px;
}

.chev-box {
    width: 18px;
    height: 10px;
    margin-left: auto;
    color: #4e4e4e;
}

.unit {
    margin-left: auto;
    color: #6e6e6e;
}

.chev-unit {
    width: 18px;
    height: 10px;
    margin-left: 20px;
    color: #4e4e4e;
}

.prop-box.split {
    padding-left: 0;
}

.split-empty {
    width: 116px;
    height: 100%;
    background-color: #2c2c2c;
}

.prop-line {
    height: 62px;
    display: flex;
    align-items: center;
    padding-right: 13px;
}

.margin-line {
    margin-top: 31px;
}

.size-section .prop-row + .margin-line {
    margin-top: 25px;
}

.padding-line {
    margin-top: 26px;
}

.padding-line .dimmer {
    margin-right: 43px;
}

.prop-pair {
    display: flex;
    justify-content: space-between;
    margin-top: 8px;
}

.pad-icon {
    width: 26px;
    height: 26px;
    margin: 0 14px 0 4px;
    color: #4e4e4e;
}

.layout-grid {
    display: flex;
    gap: 17px;
}

.layout-left {
    width: 236px;
    display: flex;
    flex-direction: column;
    gap: 18px;
}

.seg {
    height: 70px;
    display: flex;
    align-items: center;
    padding: 4px;
    border-radius: 22px;
    background-color: #1c1c1c;
}

.seg-item {
    height: 62px;
    flex: 1;
    display: flex;
    align-items: center;
    justify-content: center;
    border-radius: 20px;
}

.seg-dir .seg-item svg {
    width: 26px;
    height: 26px;
}

.seg-item.active {
    background-color: #434343;
}

.seg-dir .seg-item.active {
    flex: none;
    width: 111px;
}

.seg-dist .seg-item {
    color: #555;
}

.seg-dist .seg-item svg {
    width: 24px;
    height: 32px;
}

.seg-dist .seg-item.light {
    flex: none;
    width: 53px;
    color: #8a8a8a;
    margin-right: 3px;
}

.prop-box.gap-box {
    width: 100%;
}

.align-grid {
    width: 247px;
    height: 246px;
    display: grid;
    grid-template-columns: repeat(3, 1fr);
    grid-template-rows: repeat(3, 1fr);
    place-items: center;
    border-radius: 22px;
    background-color: #1c1c1c;
}

.cell {
    width: 18px;
    height: 18px;
    border-radius: 5px;
    background-color: #2c2c2c;
}

.bars {
    display: flex;
    flex-direction: column;
    gap: 5px;
    justify-self: start;
    align-self: start;
    margin: 10px 0 0 10px;
}

.bars i {
    display: block;
    height: 17px;
    border-radius: 5px;
    background-color: #24558f;
}

.bars .b1 {
    width: 36px;
}

.bars .b2 {
    width: 53px;
}

.bars .b3 {
    width: 27px;
}

.cut-box {
    width: 241px;
    height: 23px;
    margin: 27px 0 0 259px;
    border-radius: 22px 22px 0 0;
    background-color: #1c1c1c;
}
```
